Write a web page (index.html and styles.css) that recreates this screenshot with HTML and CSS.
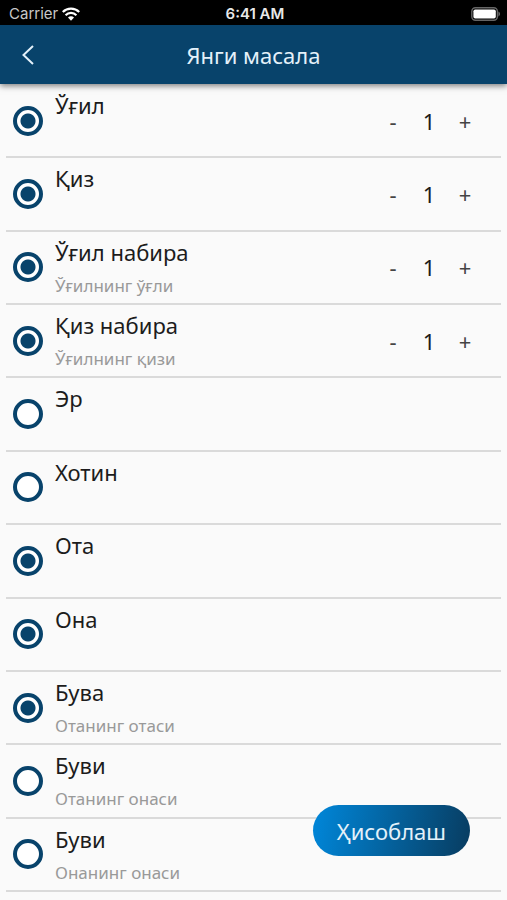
FILE: index.html
```html
<!DOCTYPE html>
<html lang="uz-Cyrl">
<head>
<meta charset="utf-8">
<meta name="viewport" content="width=device-width, initial-scale=1">
<title>Янги масала</title>
<link rel="stylesheet" href="styles.css">
</head>
<body>

<div class="status-bar">
 <div class="carrier">
  <span>Carrier</span>
  <svg class="wifi" viewBox="0 0 18 14" width="18" height="14" aria-hidden="true">
   <path d="M0.800 5a11.600 11.600 0 0 1 16.400 0" />
   <path d="M3.600 8.200a7.600 7.600 0 0 1 10.800 0" />
   <path class="wifi-dot" d="M6 10.600a4.200 4.200 0 0 1 6 0L9 13.800z" />
  </svg>
 </div>
 <span class="clock">6:41 AM</span>
 <svg class="battery" viewBox="0 0 30 14" width="30" height="14" aria-hidden="true">
  <rect class="battery-shell" x="0.8" y="0.8" width="25.6" height="12.4" rx="3.6" />
  <rect class="battery-fill" x="2.4" y="2.4" width="22.4" height="9.2" rx="1.8" />
  <path class="battery-tip" d="M27.4 4.6c2.2.8 2.2 4 0 4.8z" />
 </svg>
</div>

<header class="app-bar">
 <button class="back" type="button" aria-label="Орқага">
  <svg viewBox="0 0 12 20" width="12" height="20"><path d="M11 1L1.500 10l9.500 9" /></svg>
 </button>
 <h1>Янги масала</h1>
</header>

<main>
<ul class="heirs">
 <li class="heir">
  <input type="checkbox" id="son" checked>
  <label for="son"><span class="name">Ўғил</span></label>
  <div class="counter">
   <button type="button">-</button><output>1</output><button type="button">+</button>
  </div>
 </li>
 <li class="heir">
  <input type="checkbox" id="daughter" checked>
  <label for="daughter"><span class="name">Қиз</span></label>
  <div class="counter">
   <button type="button">-</button><output>1</output><button type="button">+</button>
  </div>
 </li>
 <li class="heir">
  <input type="checkbox" id="grandson" checked>
  <label for="grandson"><span class="name">Ўғил набира</span><span class="note">Ўғилнинг ўғли</span></label>
  <div class="counter">
   <button type="button">-</button><output>1</output><button type="button">+</button>
  </div>
 </li>
 <li class="heir">
  <input type="checkbox" id="granddaughter" checked>
  <label for="granddaughter"><span class="name">Қиз набира</span><span class="note">Ўғилнинг қизи</span></label>
  <div class="counter">
   <button type="button">-</button><output>1</output><button type="button">+</button>
  </div>
 </li>
 <li class="heir">
  <input type="checkbox" id="husband">
  <label for="husband"><span class="name">Эр</span></label>
 </li>
 <li class="heir">
  <input type="checkbox" id="wife">
  <label for="wife"><span class="name">Хотин</span></label>
 </li>
 <li class="heir">
  <input type="checkbox" id="father" checked>
  <label for="father"><span class="name">Ота</span></label>
 </li>
 <li class="heir">
  <input type="checkbox" id="mother" checked>
  <label for="mother"><span class="name">Она</span></label>
 </li>
 <li class="heir">
  <input type="checkbox" id="grandfather" checked>
  <label for="grandfather"><span class="name">Бува</span><span class="note">Отанинг отаси</span></label>
 </li>
 <li class="heir">
  <input type="checkbox" id="grandmother-f">
  <label for="grandmother-f"><span class="name">Буви</span><span class="note">Отанинг онаси</span></label>
 </li>
 <li class="heir">
  <input type="checkbox" id="grandmother-m">
  <label for="grandmother-m"><span class="name">Буви</span><span class="note">Онанинг онаси</span></label>
 </li>
</ul>
</main>

<button class="calculate" type="button">Ҳисоблаш</button>

</body>
</html>
```

FILE: styles.css
```css
* { box-sizing: border-box; }
body {
 margin: 0;
 min-height: 100vh;
 display: flex;
 flex-direction: column;
 background-color: #fafafa;
 color: #1c1c1c;
 font-family: "Noto Sans", sans-serif;
}
button {
 border: 0;
 padding: 0;
 background: none;
 color: inherit;
 font: inherit;
 cursor: pointer;
}

/* status bar */
.status-bar {
 display: grid;
 grid-template-columns: 1fr auto 1fr;
 align-items: center;
 height: 25px;
 padding: 2px 6px 0 9px;
 background-color: #000;
 color: #e8e8e8;
 font: 15px "Inter", sans-serif;
}
.carrier {
 display: flex;
 align-items: center;
 gap: 4px;
 color: #c8c8c8;
}
.clock { font-weight: 600; }
.wifi {
 fill: none;
 stroke: #fff;
 stroke-width: 2.2;
}
.wifi-dot { fill: #fff; stroke: none; }
.battery { justify-self: end; }
.battery-shell { fill: none; stroke: #666; stroke-width: 1.4; }
.battery-fill { fill: #fff; }
.battery-tip { fill: #666; }

/* app bar */
.app-bar {
 display: grid;
 grid-template-columns: 56px 1fr 56px;
 align-items: center;
 height: 59px;
 background-color: #08436b;
 color: #e4f1fa;
 box-shadow: 0 2px 6px rgba(0, 0, 0, 0.5);
 z-index: 1;
}
.app-bar h1 {
 margin: 0;
 font-size: 22px;
 font-weight: 400;
 text-align: center;
}
.back {
 display: flex;
 justify-content: center;
 align-items: center;
 height: 100%;
}
.back path {
 fill: none;
 stroke: #e4f1fa;
 stroke-width: 2;
}

/* list */
main {
 flex: 1;
 display: flex;
 padding: 1px 6px 8px;
}
.heirs {
 flex: 1;
 display: grid;
 grid-auto-rows: 1fr;
 margin: 0;
 padding: 0;
 list-style: none;
}
.heir {
 display: flex;
 align-items: center;
 gap: 12px;
 padding: 0 18px 0 7px;
 border-bottom: 2px solid #dadada;
}
.heir input {
 appearance: none;
 flex: none;
 width: 30px;
 height: 30px;
 margin: 0;
 border: 4px solid #08436b;
 border-radius: 50%;
 background-color: #fff;
}
.heir input:checked {
 background-image: radial-gradient(circle, #08436b 7px, transparent 8px);
}
.heir label {
 flex: 1;
 align-self: stretch;
 display: flex;
 flex-direction: column;
 gap: 2px;
 padding-top: 4px;
}
.name {
 font-size: 22px;
 line-height: 32px;
}
.note {
 color: #999;
 font-size: 17px;
 line-height: 32px;
}
.counter {
 display: grid;
 grid-template-columns: repeat(3, 36px);
 align-items: center;
 text-align: center;
 font-size: 22px;
 line-height: 28px;
}
.counter button { color: #444; }

.calculate {
 position: fixed;
 right: 37px;
 bottom: 44px;
 height: 51px;
 padding: 0 24px;
 border-radius: 26px;
 background: linear-gradient(100deg, #0087da, #083c60);
 color: #e4f1fa;
 font-size: 22px;
}
```
